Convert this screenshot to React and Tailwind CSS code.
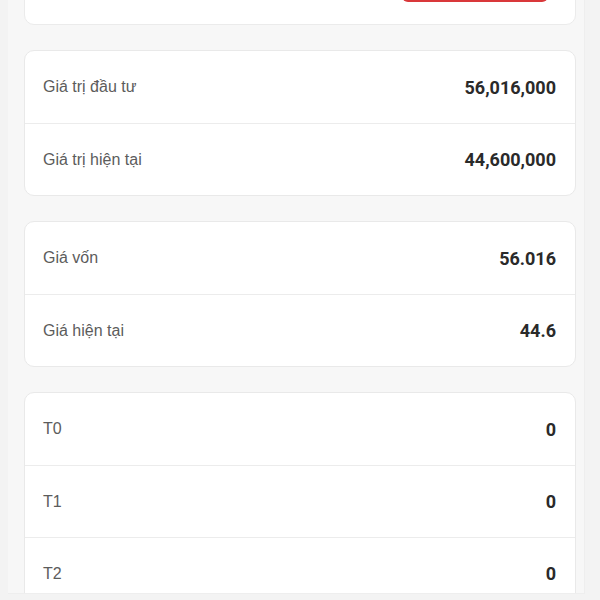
export default function App() {
  const groups = [
    [
      { label: 'Giá trị đầu tư', value: '56,016,000' },
      { label: 'Giá trị hiện tại', value: '44,600,000' },
    ],
    [
      { label: 'Giá vốn', value: '56.016' },
      { label: 'Giá hiện tại', value: '44.6' },
    ],
    [
      { label: 'T0', value: '0' },
      { label: 'T1', value: '0' },
      { label: 'T2', value: '0' },
    ],
  ];

  return (
    <div className="w-[600px] h-[600px] overflow-hidden bg-[#f3f3f3]">
      <div className="ml-[8px] mr-[15px] h-[594px] overflow-hidden bg-[#f7f7f7] border-r border-b border-[#eeeeee] pl-[16px] pr-[8px]">
        <div className="-mt-[40px] h-[65px] bg-white border border-[#ebebeb] rounded-[10px] flex justify-end items-end pb-[22px] pr-[27px]">
          <div className="w-[146px] h-[36px] bg-[#d9383a] rounded-[6px]" />
        </div>

        <div className="flex flex-col gap-[25px] mt-[25px]">
          {groups.map((rows, i) => (
            <div key={i} className="bg-white border border-[#e9e9e9] rounded-[10px]">
              {rows.map((row, j) => (
                <div
                  key={row.label}
                  className={`h-[72px] flex items-center justify-between pl-[18px] pr-[19px] ${
                    j > 0 ? 'border-t border-[#ececec]' : ''
                  }`}
                >
                  <span className="text-[16px] text-[#5c5c5c] font-['Liberation_Sans',sans-serif]">
                    {row.label}
                  </span>
                  <span className="text-[18px] font-bold text-[#2a2a2a] font-['Roboto',sans-serif]">
                    {row.value}
                  </span>
                </div>
              ))}
            </div>
          ))}
        </div>
      </div>
    </div>
  );
}
